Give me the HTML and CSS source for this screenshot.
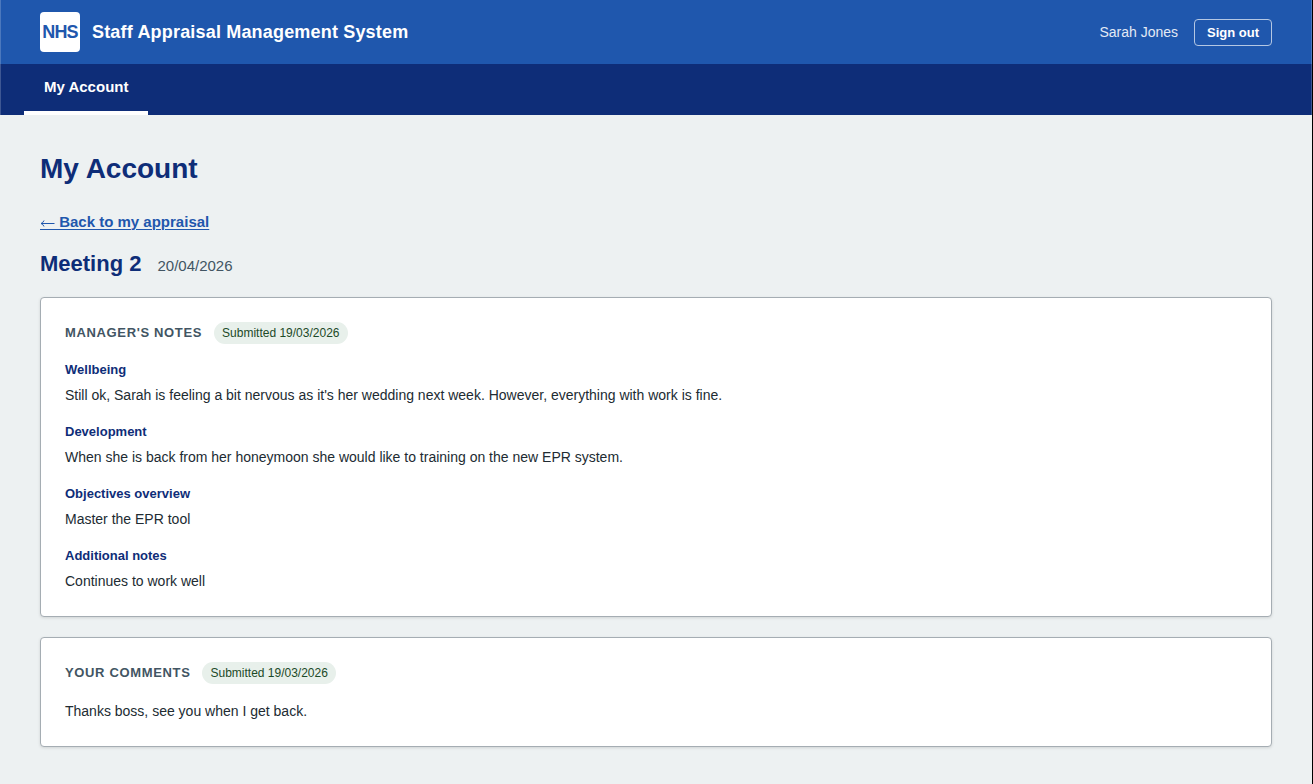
FILE: index.html
```html
<!DOCTYPE html>
<html lang="en">
	<head>
		<meta charset="UTF-8" />
		<meta name="viewport" content="width=device-width, initial-scale=1.0" />
		<title>My Account - Staff Appraisal Management System</title>
		<link rel="stylesheet" href="styles.css">
	</head>
	<body>
		<header class="header">
			<div class="brand">
				<span class="logo">NHS</span>
				<span class="system-name">Staff Appraisal Management System</span>
			</div>
			<div class="user">
				<span class="user-name">Sarah Jones</span>
				<button type="button" class="sign-out">Sign out</button>
			</div>
		</header>

		<nav class="nav">
			<a href="#" class="nav-link active">My Account</a>
		</nav>

		<main class="main">
			<h1>My Account</h1>
			<a href="#" class="back-link"><svg class="arrow" viewBox="0 0 15 11" aria-hidden="true"><path d="M14.5 4.5H1M4 1.5Q3 4 1 4.5Q3 5 4 7.5M0 10.5H15" /></svg> Back to my appraisal</a>

			<div class="meeting-header">
				<h2>Meeting 2</h2>
				<span class="meeting-date">20/04/2026</span>
			</div>

			<section class="card">
				<div class="card-header">
					<h3>Manager's notes</h3>
					<span class="badge">Submitted 19/03/2026</span>
				</div>
				<div class="note">
					<h4>Wellbeing</h4>
					<p>Still ok, Sarah is feeling a bit nervous as it's her wedding next week. However, everything with work is fine.</p>
				</div>
				<div class="note">
					<h4>Development</h4>
					<p>When she is back from her honeymoon she would like to training on the new EPR system.</p>
				</div>
				<div class="note">
					<h4>Objectives overview</h4>
					<p>Master the EPR tool</p>
				</div>
				<div class="note">
					<h4>Additional notes</h4>
					<p>Continues to work well</p>
				</div>
			</section>

			<section class="card">
				<div class="card-header">
					<h3>Your comments</h3>
					<span class="badge">Submitted 19/03/2026</span>
				</div>
				<p>Thanks boss, see you when I get back.</p>
			</section>
		</main>
	</body>
</html>
```
FILE: styles.css
```css
* {
	box-sizing: border-box;
}

body {
	margin: 0;
	min-height: 100vh;
	border-right: 1px solid black;
	background-color: #edf1f2;
	color: #212b32;
	font-family: Arial, 'Liberation Sans', sans-serif;
	font-size: 14px;
	line-height: 22px;
}

h1,
h2,
h3,
h4,
p {
	margin: 0;
}

.header,
.nav {
	box-shadow: inset 1px 0 rgba(255, 255, 255, 0.2), inset -1px 0 rgba(255, 255, 255, 0.2);
}

.header {
	display: flex;
	justify-content: space-between;
	align-items: center;
	height: 64px;
	padding: 0 40px;
	background-color: #1f57ad;
	color: white;
}

.brand {
	display: flex;
	align-items: center;
	gap: 12px;
}

.logo {
	display: flex;
	justify-content: center;
	align-items: center;
	width: 40px;
	height: 40px;
	border-radius: 4px;
	background-color: white;
	color: #1f57ad;
	font-size: 18px;
	font-weight: bold;
	letter-spacing: -0.05em;
}

.system-name {
	font-size: 18px;
	font-weight: bold;
	letter-spacing: 0.01em;
}

.user {
	display: flex;
	align-items: center;
	gap: 16px;
}

.user-name {
	color: #e3eaf5;
}

.sign-out {
	height: 27px;
	padding: 0 12px;
	border: 1px solid #b4c7e3;
	border-radius: 4px;
	background-color: transparent;
	color: white;
	font-family: inherit;
	font-size: 13px;
	font-weight: bold;
	cursor: pointer;
}

.nav {
	display: flex;
	padding: 0 24px;
	background-color: #0e2d78;
}

.nav-link {
	padding: 12px 20px 13px;
	border-bottom: 4px solid transparent;
	color: white;
	font-size: 15px;
	font-weight: bold;
	text-decoration: none;
}

.nav-link.active {
	border-bottom-color: white;
}

.main {
	padding: 36px 40px;
}

h1 {
	margin-bottom: 24px;
	color: #0e2d78;
	font-size: 28px;
	line-height: 36px;
}

.back-link {
	display: inline-block;
	color: #1f57ad;
	font-size: 15px;
	font-weight: bold;
	text-decoration-thickness: 1px;
	text-underline-offset: 2px;
}

/* the link's underline skips the svg, so the arrow carries its own */
.arrow {
	width: 15px;
	height: 11px;
	vertical-align: -3px;
	fill: none;
	stroke: currentColor;
}

.meeting-header {
	display: flex;
	align-items: baseline;
	gap: 16px;
	margin: 16px 0 18px;
}

h2 {
	color: #0e2d78;
	font-size: 22px;
	line-height: 30px;
}

.meeting-date {
	color: #425563;
	font-size: 15px;
}

.card {
	margin-bottom: 20px;
	padding: 24px;
	border: 1px solid #a5adb3;
	border-radius: 4px;
	background-color: white;
	box-shadow: 0 1px 3px rgba(0, 0, 0, 0.12);
}

.card-header {
	display: flex;
	align-items: center;
	gap: 12px;
	margin-bottom: 16px;
}

h3 {
	color: #425563;
	font-size: 13px;
	letter-spacing: 0.05em;
	text-transform: uppercase;
}

.badge {
	padding: 0 8px;
	border-radius: 11px;
	background-color: #e8f0eb;
	color: #1c4a28;
	font-size: 12px;
}

.note {
	margin-bottom: 16px;
}

.note:last-child {
	margin-bottom: 0;
}

h4 {
	margin-bottom: 4px;
	color: #0e2d78;
	font-size: 13px;
	line-height: 20px;
}
```
